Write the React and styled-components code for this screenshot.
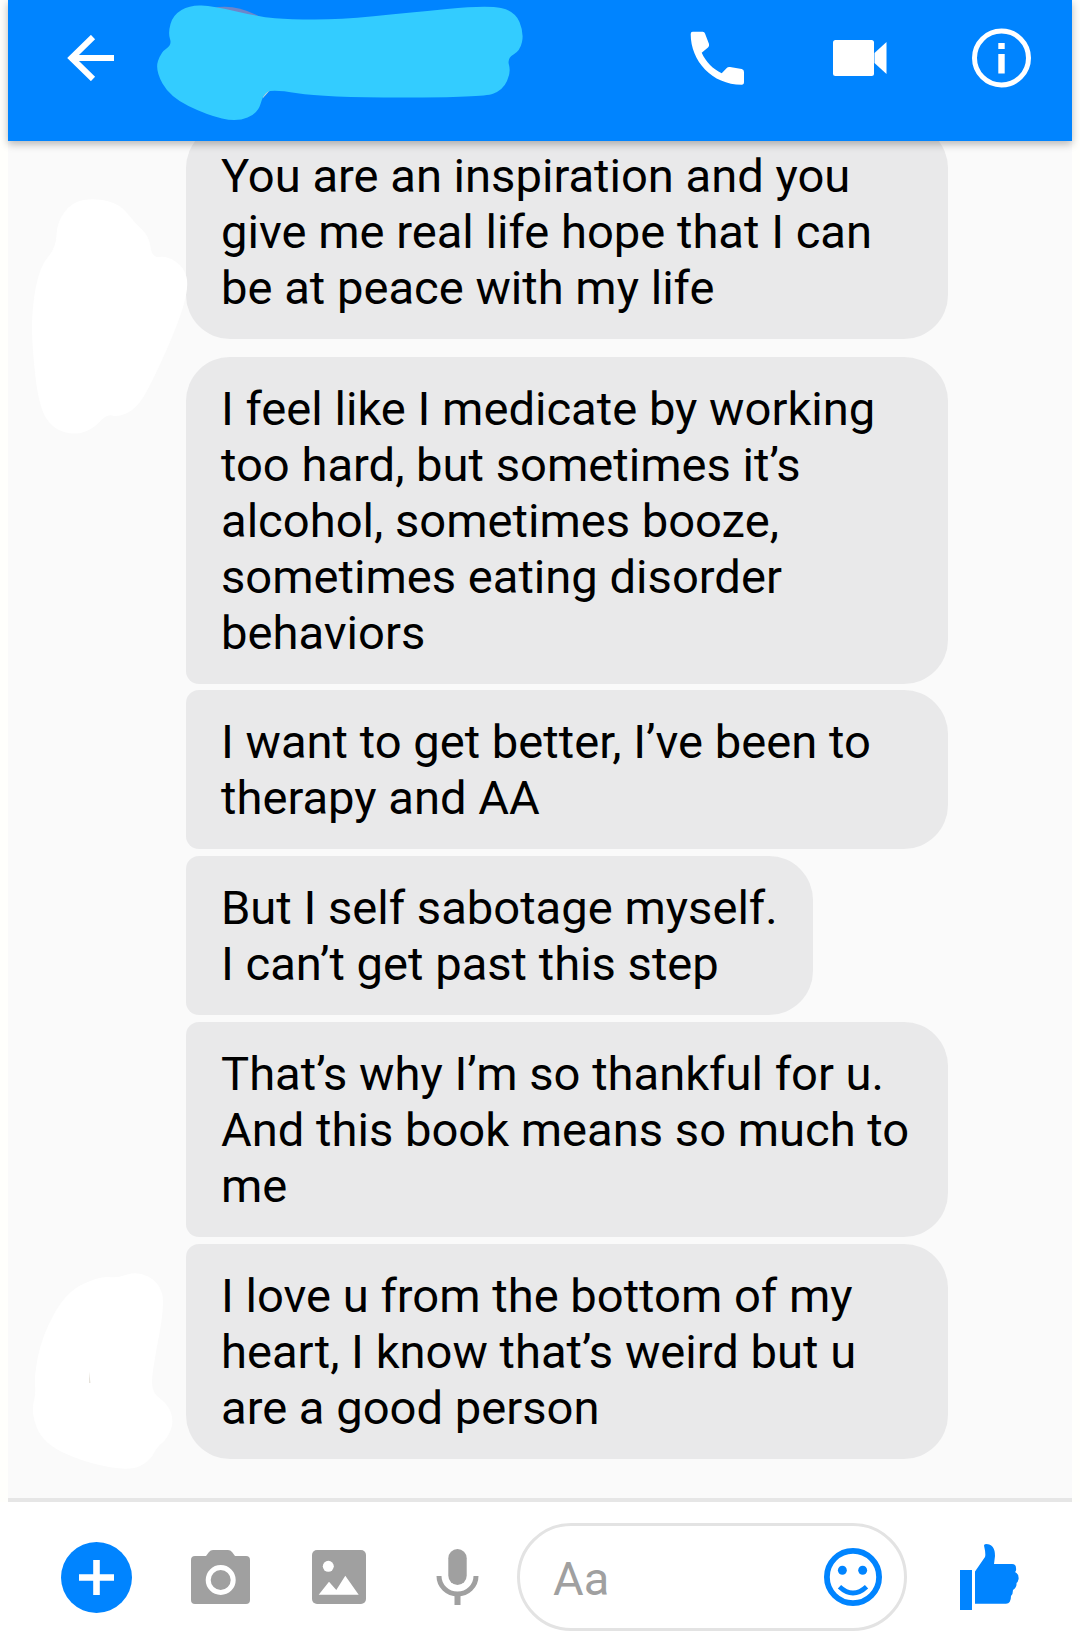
import React from "react";
import styled, { createGlobalStyle } from "styled-components";

const Global = createGlobalStyle`
  html, body { margin: 0; padding: 0; background: #fffffc; }
  #root { width: 1080px; height: 1649px; }
`;

const Page = styled.div`
  position: relative;
  width: 1080px;
  height: 1649px;
  box-sizing: border-box;
  padding: 0 8px;
  display: flex;
  flex-direction: column;
  overflow: hidden;
  font-family: Roboto, "Liberation Sans", sans-serif;
`;

const Header = styled.header`
  position: relative;
  z-index: 2;
  flex: none;
  height: 141px;
  box-sizing: border-box;
  padding: 0 41px 25px 59px;
  display: flex;
  align-items: center;
  background: #0084ff;
  box-shadow: 0 3px 8px rgba(0, 0, 0, 0.28);
`;

const HeaderSpacer = styled.div`
  flex: 1;
`;

const HeaderIcon = styled.svg`
  display: block;
  flex: none;
  margin-left: ${(p) => p.$gap || 0}px;
`;

const Chat = styled.main`
  flex: 1;
  min-height: 0;
  display: flex;
  flex-direction: column;
  justify-content: flex-end;
  overflow: hidden;
  box-sizing: border-box;
  padding: 0 0 39px 178px;
  background: #fafafa;
  border-bottom: 4px solid #e6e6e6;
`;

const Bubble = styled.div`
  flex: none;
  width: fit-content;
  max-width: 762px;
  min-width: 0;
  box-sizing: border-box;
  margin-top: ${(p) => p.$gap}px;
  padding: 24px 35px 23px;
  background: #e9e9ea;
  color: #000;
  font-size: 47.15px;
  line-height: 56px;
  border-radius: ${(p) => (p.$first ? 44 : 13)}px 44px 44px ${(p) => (p.$last ? 44 : 13)}px;
`;

const Composer = styled.footer`
  flex: none;
  height: 147px;
  box-sizing: border-box;
  margin: 0 -8px;
  padding: 3px 0 0 61px;
  display: flex;
  align-items: center;
  background: #fff;
  position: relative;
`;

const ToolIcon = styled.svg`
  display: block;
  flex: none;
  margin-left: ${(p) => p.$gap || 0}px;
`;

const InputPill = styled.div`
  flex: none;
  width: 390px;
  height: 108px;
  margin-left: 38px;
  box-sizing: border-box;
  border: 3px solid #e3e3e3;
  border-radius: 54px;
  padding: 0 22px 0 33px;
  display: flex;
  align-items: center;
  justify-content: space-between;
`;

const Placeholder = styled.span`
  color: #a0a0a0;
  font-size: 47px;
  line-height: 50px;
  padding-top: 4px;
`;

const Overlay = styled.svg`
  position: absolute;
  left: 0;
  top: 0;
  z-index: 3;
  pointer-events: none;
`;

const smooth = (pts) => {
  const mid = (a, b) => [(a[0] + b[0]) / 2, (a[1] + b[1]) / 2];
  const n = pts.length;
  const s = mid(pts[n - 1], pts[0]);
  let d = `M${s[0]} ${s[1]}`;
  for (let i = 0; i < n; i++) {
    const m = mid(pts[i], pts[(i + 1) % n]);
    d += ` Q${pts[i][0]} ${pts[i][1]} ${m[0]} ${m[1]}`;
  }
  return d + "Z";
};

const nameScribble = [
  [168, 33], [173, 15], [190, 5], [213, 6], [260, 17], [290, 19.5], [340, 19.5], [407, 13], [487, 5], [515, 11],
  [524, 33], [520, 51], [507, 58], [511, 72], [503, 90], [483, 97.5], [323, 97.5], [272, 89], [263, 95], [258, 113],
  [237, 122], [207, 115], [170, 97], [155, 70], [161, 52], [172, 45],
];

const topAvatar = [
  [56, 248], [57, 222], [72, 202], [95, 198], [120, 204], [135, 223], [149, 236], [152, 258], [167, 256], [184, 267],
  [189, 287], [177, 327], [147, 393], [133, 411], [117, 417], [107, 414], [93, 429], [75, 435], [53, 429], [39, 407],
  [32, 347], [32, 307], [40, 266],
];

const bottomAvatar = [
  [118, 1278], [137, 1271], [159, 1282], [165, 1305], [152, 1372], [152, 1393], [168, 1404], [174, 1422], [167, 1439],
  [157, 1447], [150, 1461], [130, 1471], [83, 1462], [43, 1443], [31, 1413], [36, 1393], [34, 1377], [42, 1336],
  [66, 1292], [100, 1276],
];

const messages = [
  { text: "You are an inspiration and you give me real life hope that I can be at peace with my life", gap: 0, last: true, first: true },
  { text: "I feel like I medicate by working too hard, but sometimes it’s alcohol, sometimes booze, sometimes eating disorder behaviors", gap: 18, first: true },
  { text: "I want to get better, I’ve been to therapy and AA", gap: 6 },
  { text: ["But I self sabotage myself.", <br key="b" />, "I can’t get past this step"], gap: 7 },
  { text: "That’s why I’m so thankful for u. And this book means so much to me", gap: 7 },
  { text: "I love u from the bottom of my heart, I know that’s weird but u are a good person", gap: 7, last: true },
];

export default function App() {
  return (
    <Page>
      <Global />
      <Header>
        <HeaderIcon width="48" height="46" viewBox="0 0 48 46" fill="none" stroke="#fff" strokeWidth="6">
          <path d="M47 23H5" />
          <path d="M26 2L4.5 23L26 44" />
        </HeaderIcon>
        <HeaderSpacer />
        <HeaderIcon width="56" height="58" viewBox="0 0 56 58" fill="#fff">
          <path d="M1.7 5Q1.7 2.7 3.7 2.7L13.7 2.7Q15.5 2.7 16 4.5L20 15Q20.5 17 19 18.5L12.7 23.7C17 33 24 40 32.7 44.3L38 38.7Q39 37.7 41 38L52.7 40Q55 40.5 55 43L55 53Q55 55.7 52.7 55.7C23 55.7 1.7 32 1.7 5Z" />
        </HeaderIcon>
        <HeaderIcon $gap={88} width="54" height="36" viewBox="0 0 54 36" fill="#fff">
          <rect width="41" height="36" rx="2.5" />
          <path d="M41.5 13L53.5 2V34L41.5 23Z" />
        </HeaderIcon>
        <HeaderIcon $gap={85} width="59" height="60" viewBox="0 0 59 60" fill="none">
          <circle cx="29.5" cy="30" r="27" stroke="#fff" strokeWidth="5" />
          <rect x="26.3" y="15" width="6.4" height="6" fill="#fff" />
          <rect x="26.3" y="26" width="6.4" height="19.5" fill="#fff" />
        </HeaderIcon>
      </Header>

      <Chat>
        {messages.map((m, i) => (
          <Bubble key={i} $gap={m.gap} $first={m.first} $last={m.last}>
            {m.text}
          </Bubble>
        ))}
      </Chat>

      <Composer>
        <ToolIcon width="71" height="71" viewBox="0 0 71 71">
          <circle cx="35.5" cy="35.5" r="35.5" fill="#0084ff" />
          <path d="M32.2 18h6.6v14.2H53v6.6H38.8V53h-6.6V38.8H18v-6.6h14.2Z" fill="#fff" />
        </ToolIcon>
        <ToolIcon $gap={59} width="59" height="54" viewBox="0 0 59 54">
          <path
            fill="#a0a0a0"
            d="M4 6H15L18 2Q19.5 0 22 0H37Q39.5 0 41 2L44 6H55Q59 6 59 10V50Q59 54 55 54H4Q0 54 0 50V10Q0 6 4 6Z"
          />
          <circle cx="29.7" cy="30" r="12.5" fill="none" stroke="#fff" strokeWidth="5" />
        </ToolIcon>
        <ToolIcon $gap={62} width="54" height="54" viewBox="0 0 54 54">
          <rect width="54" height="54" rx="5" fill="#a0a0a0" />
          <circle cx="16.3" cy="16.3" r="5.5" fill="#fff" />
          <path d="M6.7 44.7L17 31.7L24.3 40L33.3 25.7L46.7 44.7Z" fill="#fff" />
        </ToolIcon>
        <ToolIcon $gap={70} width="43" height="56" viewBox="0 0 43 56">
          <rect x="12.3" y="0" width="18.4" height="36" rx="9.2" fill="#a0a0a0" />
          <path d="M3 27a18.5 18 0 0 0 37 0" fill="none" stroke="#a0a0a0" strokeWidth="5" />
          <rect x="18.5" y="44" width="6" height="12" fill="#a0a0a0" />
        </ToolIcon>
        <InputPill>
          <Placeholder>Aa</Placeholder>
          <svg width="58" height="58" viewBox="0 0 60 60" fill="none">
            <circle cx="30" cy="30" r="27" stroke="#0084ff" strokeWidth="6" />
            <circle cx="19" cy="23" r="4.6" fill="#0084ff" />
            <circle cx="40" cy="23" r="4.6" fill="#0084ff" />
            <path d="M16 40Q30 53 44 40" stroke="#0084ff" strokeWidth="5" />
          </svg>
        </InputPill>
        <ToolIcon $gap={53} width="60" height="66" viewBox="0 0 60 66" fill="#0084ff">
          <rect x="0" y="26" width="12" height="40" />
          <path d="M15 27.6L25 13Q26 10 24 1.5Q24 0 26 0Q35 0 35 12L34 20L52 20Q56 20 56 24Q56.5 27 55 28Q59 30 58.6 35Q58 38 56.5 39Q57 43 53 46Q53 50 51 52Q51 59.7 46 59.7L15 59.7Z" />
        </ToolIcon>
      </Composer>

      <Overlay width="1080" height="1649" viewBox="0 0 1080 1649">
        <path d="M213 8Q236 3 262 18L240 30Z" fill="#6e85c9" />
        <path d="M262 86L271 89L263 98Z" fill="#d4d4d0" />
        <path d={smooth(nameScribble)} fill="#33ccff" />
        <path d={smooth(topAvatar)} fill="#fff" />
        <path d={smooth(bottomAvatar)} fill="#fff" />
        <path d="M89 1371.5L90.5 1383L89 1383Z" fill="#e6e2da" />
      </Overlay>
    </Page>
  );
}
